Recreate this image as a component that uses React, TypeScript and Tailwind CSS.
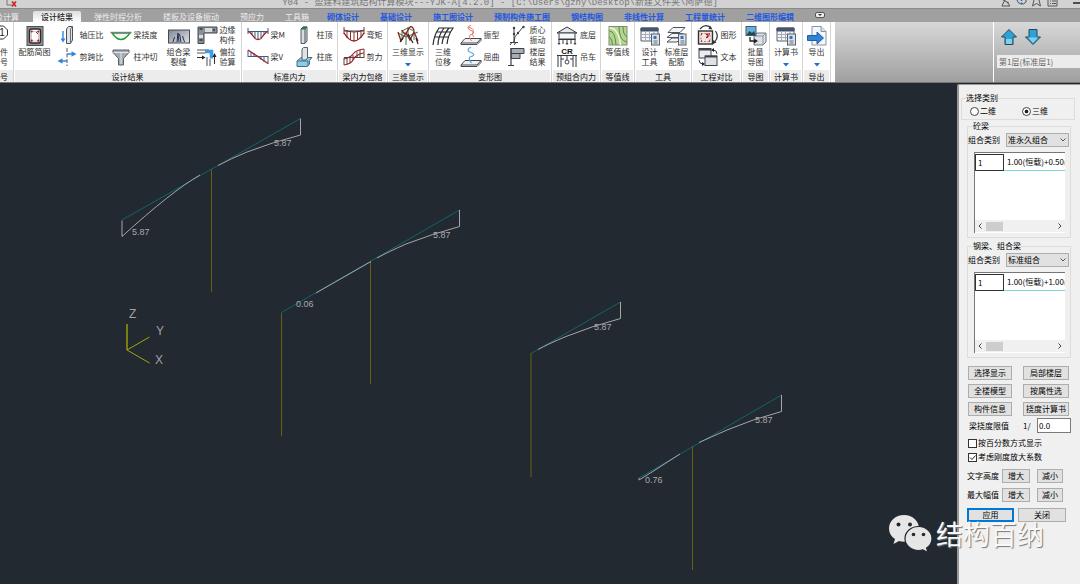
import type { ReactNode } from 'react'

type TabItem = { name: string }

const plainTabs: TabItem[] = [
	{ name: '弹性时程分析' },
	{ name: '楼板及设备振动' },
	{ name: '预应力' },
	{ name: '工具箱' },
]

const moduleTabs: TabItem[] = [
	{ name: '砌体设计' },
	{ name: '基础设计' },
	{ name: '施工图设计' },
	{ name: '预制构件施工图' },
	{ name: '钢结构图' },
	{ name: '非线性计算' },
	{ name: '工程量统计' },
	{ name: '二维图形编辑' },
]

/* ---------- Icons ---------- */

const Icon = ({ children }: { children: ReactNode }) => (
	<svg
		viewBox="0 0 22 20"
		className="h-5 w-[22px] shrink-0"
		fill="none"
		stroke="#3f444b"
		strokeWidth={1}
		aria-hidden="true"
	>
		{children}
	</svg>
)

const icons = {
	rebar: (
		<Icon>
			<rect x="3" y="0.5" width="16" height="19" fill="#8d9299" stroke="#4b4f55" />
			<rect x="5.5" y="3" width="11" height="14" rx="2" fill="#fff" stroke="#2c2c2c" strokeWidth="1.5" />
			<path d="M7 5.5h8M7.5 6v9M14.5 6v9M7 15h8" stroke="#c9a0a0" strokeWidth="0.6" />
			<g fill="#b01818" stroke="none">
				<circle cx="7.7" cy="5.5" r="1.1" />
				<circle cx="14.3" cy="5.5" r="1.1" />
				<circle cx="7.7" cy="14.7" r="1.1" />
				<circle cx="14.3" cy="14.7" r="1.1" />
			</g>
			<path d="M12 6l2 2" stroke="#b01818" />
		</Icon>
	),
	axial: (
		<Icon>
			<path d="M7 6v10" stroke="#2f86e0" strokeWidth="1.4" />
			<path d="M4.5 13.5L7 17.5l2.5-4z" fill="#2f86e0" stroke="none" />
			<path d="M10.5 4l2-2.5h4V15l-2 3.5h-4z" fill="#dfe3e8" stroke="#4d5259" />
			<path d="M14.5 4v14M14.5 4l2-2.5" stroke="#6b7078" />
		</Icon>
	),
	shear: (
		<Icon>
			<path d="M11 1v18" stroke="#555" strokeDasharray="4 1.5" />
			<path d="M11 7h6M11 14H5" stroke="#2f86e0" strokeWidth="1.4" />
			<path d="M15.5 4.2L20.5 7l-5 2.8zM6.5 11.2l-5 2.8 5 2.8z" fill="#2f86e0" stroke="none" />
		</Icon>
	),
	deflection: (
		<Icon>
			<path d="M2 8q9 13 18 0z" fill="#f3f7f3" stroke="#2c9a3c" strokeWidth="1.4" />
			<path d="M0.5 7.5h21" stroke="#7a7f86" strokeWidth="1.4" />
		</Icon>
	),
	punch: (
		<Icon>
			<path d="M3 3h16v2.5l-5.5 6V18h-5v-6.5L3 5.5z" fill="#a5abb2" stroke="#5a6067" />
			<path d="M3.5 5.5h15M11 6v11" stroke="#e4e8ec" />
		</Icon>
	),
	crack: (
		<Icon>
			<defs>
				<linearGradient id="crackFill" x1="0" y1="0" x2="1" y2="1">
					<stop offset="0" stopColor="#7e8790" />
					<stop offset="1" stopColor="#e1e5e9" />
				</linearGradient>
			</defs>
			<rect x="0.5" y="4" width="21" height="13" fill="url(#crackFill)" stroke="#454b52" />
			<path d="M5 16l1.5-5M9 16l1-9 1 9M13 16l-1.5-8M16.5 16l-2-6" stroke="#222f48" />
		</Icon>
	),
	edge: (
		<Icon>
			<path d="M2 2h19v6H8v10.5H2z" fill="#8b9096" stroke="#44484e" />
			<path d="M9 3v4h7V3zM3 10v3h4v-3z" fill="#d8dce0" stroke="none" />
			<path d="M3.5 4h3M3.5 15h3M18 4v2" stroke="#33373c" strokeWidth="1.5" />
		</Icon>
	),
	eccentric: (
		<Icon>
			<path d="M1 3h12M1 6h8M14 12v7M11 10v9" stroke="#4c5158" />
			<path d="M9 4.5h6.5v7" stroke="#3d9bea" strokeWidth="3.5" />
			<path d="M1 10.5h6M18.5 17V8" stroke="#333" />
			<path d="M6 8.5l3.5 2L6 12.5zM16.5 10l2-4 2 4z" fill="#222" stroke="none" />
		</Icon>
	),
	beamM: (
		<Icon>
			<path d="M1 6.5h20M1 3v6M21 3v6M5 6v4M8 6v7M11 6v8M14 6v7M17 6v4" stroke="#405c86" />
			<path d="M1 6.5l2 1q3 3 5 6q3 2 6 0q2-3 5-6l2-1" stroke="#a02828" strokeWidth="1.3" />
		</Icon>
	),
	beamV: (
		<Icon>
			<path d="M1 9.5h20M1 3v7M4 5v5M7 6v4M10 8v2M14 9v4M17 9v6M21 9v8" stroke="#405c86" />
			<path d="M1 3l20 13.5" stroke="#a02828" strokeWidth="1.3" />
		</Icon>
	),
	columnTop: (
		<Icon>
			<path d="M8 4l2-2h4v14l-2 2.5H8z" fill="#d9dde2" stroke="#555a61" />
			<path d="M8 4l2-2h4l-2 2z" fill="#2da04a" stroke="#256b36" />
			<path d="M12 4v14" stroke="#4b5057" />
		</Icon>
	),
	columnBottom: (
		<Icon>
			<path d="M4 14l4-3.5h11l-2.5 3V17l-2 2.5H4z" fill="#8ccbe9" stroke="#456f88" />
			<path d="M4 14h11v5" stroke="#456f88" />
			<path d="M9 2l1.5-1.5h4V11L13 13H9z" fill="#dfe3e7" stroke="#5c6269" />
		</Icon>
	),
	envelopeM: (
		<Icon>
			<path d="M1 5q10 4 20 0M1 2v7M21 2v7M4 5v8M7.5 6v9M11 7v9M14.5 6v9M18 5v8" stroke="#8c3030" />
			<path d="M1 8q10 16 20 0" stroke="#8c2020" strokeWidth="1.4" />
			<path d="M1 6h20" stroke="#40404a" />
		</Icon>
	),
	envelopeV: (
		<Icon>
			<path d="M1 10.5h20M1 11v7M4 11v6M7 9v7M10 8v5M14 5v6M17 3v8M21 2v9" stroke="#594044" />
			<path d="M1 18q7-1 9-5t5-5q3-2 6-2M1 12q6-1 9-5t11-5" stroke="#9d2424" strokeWidth="1.2" />
		</Icon>
	),
	show3d: (
		<Icon>
			<path d="M5 4v10M11 1v10M17 4v10M9 7v12M5 5l6-3 6 3M1 7l8 4 12-5" stroke="#3a7a4d" />
			<path d="M1 6l3 9 5-8 4 7 4-8 4 9M5 4q3 7 6 0t6 0" stroke="#8f2222" strokeWidth="1.3" />
			<path d="M3 16l3-4M11 8l5 9M19 12l2 6" stroke="#222" strokeWidth="1.2" />
		</Icon>
	),
	shift3d: (
		<Icon>
			<path d="M1 19Q2 9 7 2h14Q16 9 15 18M6 19q0-9 6-17M10 18Q11 9 17 2M5 6h14M3 11h14" stroke="#25282c" strokeWidth="1.2" />
		</Icon>
	),
	mode: (
		<Icon>
			<path d="M1 18l4-4.5h16L17 18z" fill="#eef1f4" stroke="#45494f" />
			<path d="M1 18v1.5h16l4-4v-2" stroke="#45494f" />
			<path d="M11 0q-6 3 0 5.5t-1 4.5q-2 2 1.5 6M8 2q7 2 5 5t1 5" stroke="#ee7768" />
		</Icon>
	),
	buckle: (
		<Icon>
			<path d="M1 18l4-4.5h16L17 18z" fill="#eef1f4" stroke="#45494f" />
			<path d="M1 18v1.5h16l4-4v-2" stroke="#45494f" />
			<path d="M11 0q-6 3 0 5.5t-1 4.5q-2 2 1.5 6" stroke="#5aa8e4" strokeWidth="1.2" />
		</Icon>
	),
	mass: (
		<Icon>
			<path d="M8 17V3M8 17q0-6 4-9l5-6M4 17.5h8M4 20l1.5-2M8 20l1.5-2" stroke="#3a3e44" />
			<g fill="#3a3e44" stroke="none">
				<circle cx="8" cy="3" r="1.2" />
				<circle cx="8" cy="9" r="1.2" />
				<circle cx="12" cy="8" r="1.2" />
				<circle cx="17.5" cy="2" r="1.2" />
			</g>
		</Icon>
	),
	storey: (
		<Icon>
			<path d="M5 1.5h13v5h-4v5H5z" fill="#a7adb5" stroke="#3c4148" />
			<path d="M5 1v17.5M5 6.5h9M2 18.5h6" stroke="#3c4148" strokeWidth="1.2" />
		</Icon>
	),
	base: (
		<Icon>
			<path d="M1 8l10-6 10 6z" fill="#e6e9ec" stroke="#34383e" />
			<path d="M3 8h16v6H3z" fill="#f6f7f8" />
			<path d="M2.5 14.5h17M3 14v5M7 14v5M11 14v5M15 14v5M19 14v5M2 18l1 1.5 1-1.5M10 18l1 1.5 1-1.5M18 18l1 1.5 1-1.5" stroke="#34383e" />
		</Icon>
	),
	crane: (
		<Icon>
			<path d="M2 8v12M5 8v12M17 8v12M20 8v12M1 8.5h20M5 12h3M14 12h3M11 9v4" stroke="#34383e" />
			<circle cx="11" cy="15" r="2" />
			<text x="11" y="6.5" textAnchor="middle" fontSize="8" fontWeight="700" fontFamily="Liberation Sans, sans-serif" fill="#111" stroke="none">
				CR
			</text>
		</Icon>
	),
	contour: (
		<Icon>
			<rect x="2" y="0.5" width="18" height="18.5" fill="#b3d58d" stroke="#7f8d78" />
			<path d="M20 16Q12 15 12 0.5M20 11Q16 9 16 0.5M2.5 5Q8 5 9 19M2.5 11q3 2 3 8" stroke="#5d8a46" />
			<path d="M2.5 2q9 0 11 17" stroke="#eef6dd" strokeWidth="1.5" />
		</Icon>
	),
	table: (
		<Icon>
			<path d="M2 2h17v13H2z" fill="#f4f6f8" stroke="#5a6069" />
			<path d="M2 2h17v3H2z" fill="#46546c" stroke="#46546c" />
			<path d="M2 8.5h17M2 11.5h17M6.5 5v10M10.5 5v10M15 5v10" stroke="#a4abb5" />
			<rect x="12.5" y="8" width="8" height="11" fill="#dce3ea" stroke="#58606a" />
			<path d="M14.5 10h3v3h-3z" fill="#2b78c0" stroke="none" />
			<path d="M14.5 15h4M14.5 17h4" stroke="#6a727c" />
		</Icon>
	),
	layers: (
		<Icon>
			<path d="M1 16l5-4h9l-4 4zM1 11.5l5-4h11l-4 4zM2 6.500l5-5h12l-5 5z" fill="#f3f5f7" stroke="#4f545b" />
			<rect x="12.5" y="8" width="7.5" height="11" fill="#dce3ea" stroke="#58606a" />
			<path d="M14.5 10h3v3h-3z" fill="#2b78c0" stroke="none" />
			<path d="M14.5 15h4M14.5 17h4" stroke="#6a727c" />
		</Icon>
	),
	compareImage: (
		<Icon>
			<rect x="1.5" y="6" width="14" height="13" fill="#f4e4e2" stroke="#2f3338" strokeWidth="1.4" />
			<path d="M4 8.5h9v8H4z" stroke="#b38888" strokeDasharray="2 1.5" />
			<path d="M4 9h1M12 9h1M4 16h1M12 16h1M9 9.5q2-1 2 1t-2 2" stroke="#b01818" strokeWidth="1.5" />
			<path d="M3 4q5-6 11-1M18.5 6q4 6-1 11" stroke="#2f3338" strokeWidth="1.2" />
			<path d="M13 0.5l2.5 4-4-0.5zM16 15v4l3.5-1.5z" fill="#2f3338" stroke="none" />
		</Icon>
	),
	compareText: (
		<Icon>
			<rect x="2" y="1.5" width="12" height="9.5" fill="#e9ebee" />
			<path d="M2 2.5h12" strokeWidth="2" />
			<rect x="8" y="9" width="12" height="9.5" fill="#dfe3e7" />
			<path d="M8 9.5h12" strokeWidth="2" />
			<path d="M16 3q4 0 4 4M2 13q0 4 4 4" />
			<path d="M17 1l-3 2 3 2zM5 15l3 2-3 2z" fill="#222" stroke="none" />
		</Icon>
	),
	batch: (
		<Icon>
			<path d="M9 10l3-3h9v9l-3 3H9z" fill="#dde2e8" stroke="#6c737c" />
			<path d="M9 10h9v9M18 10l3-3" stroke="#8d949d" />
			<rect x="1" y="0.5" width="10" height="9" fill="#63b2dc" stroke="#4c5a68" />
			<path d="M1.5 9l3-4 2.5 2 2-2 1.5 4z" fill="#1d4a52" stroke="none" />
			<path d="M5 11v4h5" stroke="#222" strokeWidth="1.3" />
			<path d="M9 12.5l4 2.5-4 2.5z" fill="#222" stroke="none" />
		</Icon>
	),
	exportFile: (
		<Icon>
			<path d="M6 0.5h9l5 5V19H6z" fill="#f3f7fb" stroke="#8394a6" />
			<path d="M15 0.5v5h5" fill="#d5e2ee" stroke="#8394a6" />
			<path d="M1.5 9.5H11V6l6.5 6-6.5 6v-3.5H1.5z" fill="#2f84d6" stroke="#245f9c" />
		</Icon>
	),
}

/* ---------- Ribbon parts ---------- */

const Group = ({
	title,
	width,
	children,
}: {
	title: string
	width: string
	children: ReactNode
}) => (
	<section
		className={`flex shrink-0 flex-col border-r border-[#d4d4d4] bg-white ${width}`}
	>
		<div className="flex h-12 justify-center overflow-hidden pt-[2px]">
			{children}
		</div>
		<h2 className="mx-px h-3 bg-[#ececec] text-center leading-[13px] whitespace-nowrap text-[#111]">
			{title}
		</h2>
	</section>
)

const BigItem = ({
	icon,
	lines,
	menu,
	width = 'w-[27px]',
}: {
	icon: ReactNode
	lines: string[]
	menu?: boolean
	width?: string
}) => (
	<button
		className={`flex shrink-0 flex-col items-center leading-[10px] whitespace-nowrap ${width}`}
	>
		<span className="flex h-[23px] items-center">{icon}</span>
		{lines.map((line) => (
			<span key={line}>{line}</span>
		))}
		{menu && (
			<svg viewBox="0 0 6 4" className="mt-1.5 h-1 w-1.5" aria-hidden="true">
				<path d="M0 0h6L3 3.5z" fill="#1d6fd8" />
			</svg>
		)}
	</button>
)

const SmallItem = ({ icon, lines }: { icon: ReactNode; lines: string[] }) => (
	<button className="flex h-[22px] items-center gap-[2px] text-left leading-[10px] whitespace-nowrap">
		{icon}
		<span>
			{lines.map((line) => (
				<span key={line} className="block">
					{line}
				</span>
			))}
		</span>
	</button>
)

const Column = ({
	size = 'w-[46px] pl-[3px]',
	children,
}: {
	size?: string
	children: ReactNode
}) => <div className={`flex shrink-0 flex-col ${size}`}>{children}</div>

const TitleBar = () => (
	<header className="flex h-[9px] items-end overflow-hidden border-b border-[#8a8a8a] bg-[#d2d2d2]">
		<div className="flex flex-1">
			<svg viewBox="0 0 12 8" className="ml-1.5 h-2 w-3" fill="none" aria-hidden="true">
				<path d="M1 0v5h5" stroke="#777" />
				<path d="M6 1.5l4 5M10 1.5l-4 5" stroke="#d02020" strokeWidth="1.6" />
			</svg>
		</div>
		<h1 className="mr-20 h-3 shrink-0 font-['Liberation_Mono','Noto_Sans_CJK_SC',monospace] text-[9px] leading-[14px] whitespace-nowrap text-[#777]">
			Y04 - 盈建科建筑结构计算模块---YJK-A[4.2.0] - [C:\Users\gzhy\Desktop\新建文件夹\阿萨德]
		</h1>
		<div className="flex flex-1 justify-end">
			<svg viewBox="0 0 80 8" className="h-2 w-20" fill="none" stroke="#555" aria-hidden="true">
				<path d="M3 0l6 3M5 0q-2 3-3 6h8M7 2l3 4" />
				<path d="M17 0a5 5 0 0 0 9 2V0" stroke="#456" />
				<path d="M21.5 0v1M21.5 2.5v1.5" stroke="#2563c8" strokeWidth="1.5" />
				<path d="M34 0l-1.5 6 4-2.5 4 2.5L39 0" />
				<path d="M48 0v6h9V0M50 1h1M52 1h4M50 3.5h1M52 3.5h4" />
				<path d="M73 3h7" stroke="#222" strokeWidth="1.5" />
			</svg>
		</div>
	</header>
)

const TabBar = () => (
	<nav className="flex h-[13px] items-end overflow-hidden bg-[#a0a0a0] leading-[11px] whitespace-nowrap text-[#ececec]">
		<div className="flex w-[33px] shrink-0 justify-end pr-[14px]">
			<a href="#pre">前处理及计算</a>
		</div>
		<a
			href="#result"
			className="w-12 shrink-0 rounded-t-xs bg-linear-to-b from-[#dedede] to-white text-center font-medium text-[#222]"
		>
			设计结果
		</a>
		<div className="ml-[13px] flex gap-[21px]">
			{plainTabs.map((tab) => (
				<a key={tab.name} href="#tab">
					{tab.name}
				</a>
			))}
		</div>
		<div className="ml-[18px] flex gap-[21px] font-bold text-[#2358e0]">
			{moduleTabs.map((tab) => (
				<a key={tab.name} href="#module">
					{tab.name}
				</a>
			))}
		</div>
		<button
			aria-label="More"
			className="mb-1 ml-[21px] flex h-1.5 w-2.5 items-center justify-center rounded-xs border border-[#555] bg-[#eee]"
		>
			<svg viewBox="0 0 4 2" className="h-0.5 w-1" aria-hidden="true">
				<path d="M0 0h4L2 2z" fill="#333" />
			</svg>
		</button>
	</nav>
)

const Ribbon = () => (
	<div className="flex h-[60px] overflow-hidden bg-linear-to-b from-[#d8d8d8] to-[#a0a0a0] text-[#333]">
		<section className="flex w-[14px] shrink-0 flex-col items-end overflow-hidden border-r border-[#d4d4d4] bg-white">
			<button className="flex h-12 flex-col items-end pt-[2px] pr-[5px] leading-[10px] whitespace-nowrap">
				<svg viewBox="0 0 16 23" className="h-[23px] w-4" aria-hidden="true">
					<path d="M4.5 2h7l4 4v5l-4 4h-7l-4-4V6z" fill="#fff" stroke="#333" />
					<text x="10" y="12" textAnchor="middle" fontSize="10" fontFamily="Liberation Sans, sans-serif" fill="#222">
						1
					</text>
				</svg>
				<span>构件</span>
				<span>编号</span>
			</button>
			<h2 className="flex h-3 w-full justify-end bg-[#ececec] pr-[5px] leading-[13px] whitespace-nowrap text-[#111]">
				编号
			</h2>
		</section>
		<Group title="设计结果" width="w-[228px]">
			<BigItem icon={icons.rebar} lines={['配筋简图']} width="w-10" />
			<Column size="w-[54px] pl-px">
				<SmallItem icon={icons.axial} lines={['轴压比']} />
				<SmallItem icon={icons.shear} lines={['剪跨比']} />
			</Column>
			<Column size="w-[54px] pl-px">
				<SmallItem icon={icons.deflection} lines={['梁挠度']} />
				<SmallItem icon={icons.punch} lines={['柱冲切']} />
			</Column>
			<BigItem icon={icons.crack} lines={['组合梁', '裂缝']} width="w-8" />
			<Column size="w-[46px] pl-px">
				<SmallItem icon={icons.edge} lines={['边缘', '构件']} />
				<SmallItem icon={icons.eccentric} lines={['偏拉', '验算']} />
			</Column>
		</Group>
		<Group title="标准内力" width="w-24">
			<Column>
				<SmallItem icon={icons.beamM} lines={['梁M']} />
				<SmallItem icon={icons.beamV} lines={['梁V']} />
			</Column>
			<Column>
				<SmallItem icon={icons.columnTop} lines={['柱顶']} />
				<SmallItem icon={icons.columnBottom} lines={['柱底']} />
			</Column>
		</Group>
		<Group title="梁内力包络" width="w-[50px]">
			<Column>
				<SmallItem icon={icons.envelopeM} lines={['弯矩']} />
				<SmallItem icon={icons.envelopeV} lines={['剪力']} />
			</Column>
		</Group>
		<Group title="三维显示" width="w-[41px]">
			<BigItem icon={icons.show3d} lines={['三维显示']} menu width="w-10" />
		</Group>
		<Group title="变形图" width="w-[123px]">
			<BigItem icon={icons.shift3d} lines={['三维', '位移']} />
			<Column size="w-12 pl-[3px]">
				<SmallItem icon={icons.mode} lines={['振型']} />
				<SmallItem icon={icons.buckle} lines={['屈曲']} />
			</Column>
			<Column size="w-[46px] pl-px">
				<SmallItem icon={icons.mass} lines={['质心', '振动']} />
				<SmallItem icon={icons.storey} lines={['楼层', '结果']} />
			</Column>
		</Group>
		<Group title="预组合内力" width="w-[49px]">
			<Column>
				<SmallItem icon={icons.base} lines={['底层']} />
				<SmallItem icon={icons.crane} lines={['吊车']} />
			</Column>
		</Group>
		<Group title="等值线" width="w-[34px]">
			<BigItem icon={icons.contour} lines={['等值线']} />
		</Group>
		<Group title="工具" width="w-[57px]">
			<BigItem icon={icons.table} lines={['设计', '工具']} />
			<BigItem icon={icons.layers} lines={['标准层', '配筋']} />
		</Group>
		<Group title="工程对比" width="w-[50px]">
			<Column>
				<SmallItem icon={icons.compareImage} lines={['图形']} />
				<SmallItem icon={icons.compareText} lines={['文本']} />
			</Column>
		</Group>
		<Group title="导图" width="w-7">
			<BigItem icon={icons.batch} lines={['批量', '导图']} />
		</Group>
		<Group title="计算书" width="w-[33px]">
			<BigItem icon={icons.table} lines={['计算书']} menu />
		</Group>
		<Group title="导出" width="w-7">
			<BigItem icon={icons.exportFile} lines={['导出']} menu />
		</Group>
		<div className="w-1 shrink-0 bg-white" />
		<div className="flex-1" />
		{/* Storey switcher */}
		<div className="flex w-[87px] shrink-0 flex-col border-l border-white pl-[3px]">
			<div className="mb-1 flex h-[29px] items-center gap-2 pl-1">
				<button aria-label="上一层">
					<svg viewBox="0 0 16 16" className="size-4" aria-hidden="true">
						<path d="M8 0.5l7.5 7.5H12v7.5H4V8H0.5z" fill="#2aa3d6" stroke="#2a4654" />
						<path d="M5 10h6v5H5z" fill="#7ed0ee" />
					</svg>
				</button>
				<button aria-label="下一层">
					<svg viewBox="0 0 16 16" className="size-4" aria-hidden="true">
						<path d="M8 15.5L0.5 8H4V0.5h8V8h3.5z" fill="#2aa3d6" stroke="#2a4654" />
						<path d="M8 14l5-5.5H3z" fill="#7ed0ee" />
					</svg>
				</button>
			</div>
			<select
				aria-label="楼层"
				className="h-[13px] w-full appearance-none bg-[#ececec] pl-0.5 text-[#666]"
			>
				<option>第1层(标准层1)</option>
			</select>
		</div>
	</div>
)

/* ---------- Model view ---------- */

const columns = [
	{ x: 211.5, top: 169, bottom: 292 },
	{ x: 281.5, top: 313, bottom: 436 },
	{ x: 370.5, top: 261, bottom: 384 },
	{ x: 531, top: 353, bottom: 477 },
	{ x: 692.5, top: 446, bottom: 570 },
]

const beams = [
	'M122 220L300.5 118.5',
	'M281.5 312.5L459.5 210',
	'M531 353.5L620.5 302',
	'M639 478L781.5 395',
]

const deflections = [
	'M122 220.5v16Q172 191 200 175',
	'M218 165.5Q230 159 247 152Q273 142 300.5 135V118.5',
	'M316 293L371 261.5',
	'M377 258Q388 252 406 244Q432 234 459.5 226.5V210',
	'M538 349.5Q548 344 566 336.5Q592 326 620.5 318.5V302',
	'M639 478v2l13-8L680 454',
	'M699 442.5Q709 438 727 430Q753 419 781.5 411.5V395',
]

const values = [
	{ x: 132, y: 235, text: '5.87' },
	{ x: 274, y: 146, text: '5.87' },
	{ x: 296, y: 307, text: '0.06' },
	{ x: 433, y: 238, text: '5.87' },
	{ x: 594, y: 330, text: '5.87' },
	{ x: 755, y: 423, text: '5.87' },
	{ x: 645, y: 483, text: '0.76' },
]

const ModelView = () => (
	<div className="min-w-0 flex-1 overflow-hidden bg-[#222931]">
		<svg viewBox="0 83 957 501" width="957" height="501" fill="none" role="img" aria-label="Beam deflection diagram">
			<g stroke="#62620f">
				{columns.map((c) => (
					<path key={c.x} d={`M${c.x} ${c.top}V${c.bottom}`} />
				))}
			</g>
			<g stroke="#11656a">
				{beams.map((d) => (
					<path key={d} d={d} />
				))}
			</g>
			<g stroke="#a6a6a6">
				{deflections.map((d) => (
					<path key={d} d={d} />
				))}
			</g>
			<g fontSize="9" fill="#aaaaaa" fontFamily="'Liberation Sans Narrow', 'Liberation Sans', sans-serif">
				{values.map((v) => (
					<text key={`${v.x}-${v.y}`} x={v.x} y={v.y}>
						{v.text}
					</text>
				))}
			</g>
			{/* Axis tripod */}
			<path d="M127 324v26" stroke="#7c7c14" strokeWidth="2" />
			<path d="M127 350L149.5 337M127 350L149.5 363" stroke="#a3a312" />
			<g fontSize="12" fill="#a0a0a6" fontFamily="'Liberation Sans', sans-serif">
				<text x="129" y="318">Z</text>
				<text x="156" y="335">Y</text>
				<text x="155" y="364">X</text>
			</g>
		</svg>
	</div>
)

/* ---------- Side panel ---------- */

const PushButton = ({
	children,
	primary,
}: {
	children: ReactNode
	primary?: boolean
}) => (
	<button
		className={`h-[14px] w-full bg-[#e1e1e1] whitespace-nowrap ${
			primary
				? 'border-2 border-[#0078d7] leading-[10px]'
				: 'border border-[#adadad] leading-3'
		}`}
	>
		{children}
	</button>
)

const Combination = ({
	id,
	title,
	option,
	formula,
}: {
	id: string
	title: string
	option: string
	formula: string
}) => (
	<fieldset className="mr-1 ml-1.5 min-w-0 border border-[#dcdcdc] pb-1">
		<legend className="ml-[5px] leading-[10px]">{title}</legend>
		<div className="mt-[2px] mr-px flex h-[14px] items-center justify-between">
			<label htmlFor={id}>组合类别</label>
			<div className="relative">
				<select
					id={id}
					className="block h-[14px] w-[63px] appearance-none border border-[#adadad] bg-[#e1e1e1] pl-px"
				>
					<option>{option}</option>
				</select>
				<svg
					viewBox="0 0 6 4"
					className="pointer-events-none absolute top-[5px] right-[3px] h-1 w-1.5"
					fill="none"
					stroke="#555"
					aria-hidden="true"
				>
					<path d="M0.5 0.5L3 3 5.5 0.5" />
				</svg>
			</div>
		</div>
		<div className="mt-[5px] mr-[5px] ml-1.5 flex h-[81px] flex-col justify-between overflow-hidden border-t border-l border-[#777] bg-white pb-px">
			<table className="mt-px w-full table-fixed border-collapse">
				<tbody>
					<tr className="h-4 border-b border-[#7fd6d6]">
						<td className="w-7 border border-[#333] pl-0.5">1</td>
						<td className="overflow-hidden pl-[3px] whitespace-nowrap">{formula}</td>
					</tr>
				</tbody>
			</table>
			<div className="flex h-3 items-center bg-[#f0f0f0] px-[3px]">
				<svg viewBox="0 0 4 6" className="h-1.5 w-1" fill="none" stroke="#444" aria-hidden="true">
					<path d="M3.5 0.5L1 3l2.5 2.5" />
				</svg>
				<div className="ml-1 h-[9px] w-[17px] bg-[#cdcdcd]" />
				<svg viewBox="0 0 4 6" className="ml-auto h-1.5 w-1" fill="none" stroke="#444" aria-hidden="true">
					<path d="M0.5 0.5L3 3 0.5 5.5" />
				</svg>
			</div>
		</div>
	</fieldset>
)

const Radio = ({ label, checked }: { label: string; checked?: boolean }) => (
	<label className="flex items-center gap-px">
		<input
			type="radio"
			name="dimension"
			defaultChecked={checked}
			className="size-[9px] appearance-none rounded-full border border-[#444] bg-white checked:bg-[radial-gradient(#222_30%,#fff_45%)]"
		/>
		{label}
	</label>
)

const Check = ({ label, checked }: { label: string; checked?: boolean }) => (
	<label className="flex h-[14px] items-center gap-px whitespace-nowrap">
		<span className="relative size-[9px]">
			<input
				type="checkbox"
				defaultChecked={checked}
				className="peer block size-[9px] appearance-none border border-[#333] bg-white"
			/>
			<svg
				viewBox="0 0 9 9"
				className="pointer-events-none absolute inset-0 hidden size-[9px] peer-checked:block"
				fill="none"
				stroke="#222"
				aria-hidden="true"
			>
				<path d="M2 4.5l2 2 3.5-4" />
			</svg>
		</span>
		{label}
	</label>
)

const ScaleRow = ({ label }: { label: string }) => (
	<div className="mt-[5px] flex h-[14px] items-center whitespace-nowrap">
		<span className="w-[35px]">{label}</span>
		<div className="w-7">
			<PushButton>增大</PushButton>
		</div>
		<div className="ml-[7px] w-[26px]">
			<PushButton>减小</PushButton>
		</div>
	</div>
)

const actions = ['选择显示', '局部楼层', '全楼模型', '按属性选', '构件信息', '挠度计算书']

const SidePanel = () => (
	<aside className="mt-px w-[123px] shrink-0 rounded-tl-xs border-t border-l-2 border-[#999] bg-[#f0f0f0] pt-2 pr-[5px] pl-[2px] text-black">
		<fieldset className="border border-[#dcdcdc]">
			<legend className="ml-1 leading-[10px]">选择类别</legend>
			<div className="flex h-4 items-center gap-[26px] pl-2">
				<Radio label="二维" />
				<Radio label="三维" checked />
			</div>
		</fieldset>
		<div className="mt-px flex flex-col gap-[3px]">
			<Combination id="concrete" title="砼梁" option="准永久组合" formula="1.00(恒载)+0.50(活载)" />
			<Combination id="steel" title="钢梁、组合梁" option="标准组合" formula="1.00(恒载)+1.00(活载)" />
		</div>
		<div className="mt-2 ml-[7px] grid w-[101px] grid-cols-[44px_46px] justify-between gap-y-1">
			{actions.map((name) => (
				<PushButton key={name}>{name}</PushButton>
			))}
		</div>
		<div className="mt-[2px] ml-2 flex h-[15px] items-center">
			<label htmlFor="limit" className="w-[54px]">
				梁挠度限值
			</label>
			<span className="w-[14px]">1/</span>
			<input
				id="limit"
				defaultValue="0.0"
				className="h-[15px] w-[34px] border border-[#7a7a7a] bg-white pl-px"
			/>
		</div>
		<div className="mt-[3px] ml-[7px]">
			<Check label="按百分数方式显示" />
			<Check label="考虑刚度放大系数" checked />
		</div>
		<div className="ml-1.5">
			<ScaleRow label="文字高度" />
			<ScaleRow label="最大幅值" />
			<div className="mt-1.5 flex gap-1">
				<div className="w-[47px]">
					<PushButton primary>应用</PushButton>
				</div>
				<div className="w-12">
					<PushButton>关闭</PushButton>
				</div>
			</div>
		</div>
	</aside>
)

const Watermark = () => (
	<div className="pointer-events-none absolute right-9 bottom-[30px] flex items-center gap-1">
		<svg viewBox="0 0 44 40" className="h-10 w-11" aria-hidden="true">
			<path
				d="M16 1C7.5 1 1 7 1 14.5c0 4.5 2.2 8 6 10.5l-1.5 5 5.5-3c1.6.5 3.2.8 5 .8 8.5 0 15-6 15-13.300S24.5 1 16 1z"
				fill="#e6e6e6"
			/>
			<path
				d="M30.5 12.5c-7.5 0-13.5 5.3-13.5 12s6 12 13.5 12c1.6 0 3-.2 4.400-.7l5 2.700-1.300-4.500c3.300-2.200 5.400-5.600 5.400-9.500 0-6.700-6-12-13.500-12z"
				fill="#e6e6e6"
				stroke="#222931"
				strokeWidth="1.2"
			/>
			<g fill="#222931">
				<circle cx="10.5" cy="10.5" r="2" />
				<circle cx="22" cy="10.5" r="2" />
				<circle cx="25.5" cy="20.5" r="1.8" />
				<circle cx="35.5" cy="20.5" r="1.8" />
			</g>
		</svg>
		<span className="text-[27px] leading-6 font-normal text-[#f8f8f8] [text-shadow:1px_1px_1px_#777]">
			结构百纳
		</span>
	</div>
)

const App = () => {
	return (
		<div className="flex min-h-screen flex-col bg-[#222931] font-['Noto_Sans_CJK_SC','Liberation_Sans',sans-serif] text-[8px]">
			<TitleBar />
			<TabBar />
			<Ribbon />
			<main className="relative flex flex-1 border-t border-[#777]">
				<ModelView />
				<SidePanel />
				<Watermark />
			</main>
		</div>
	)
}
export default App
